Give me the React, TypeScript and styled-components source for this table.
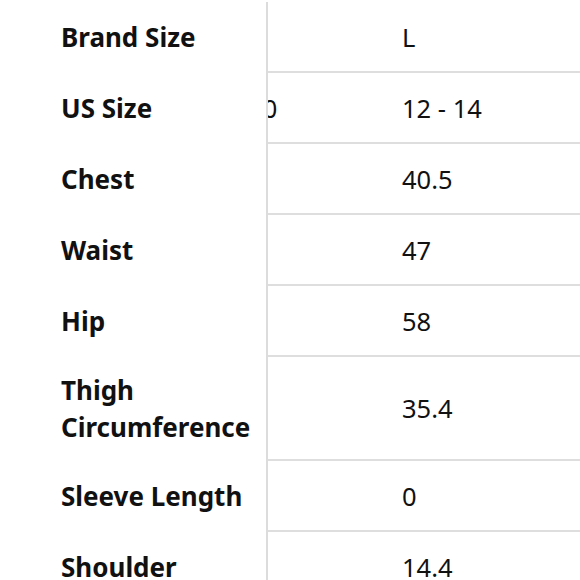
import React from "react";
import styled, { createGlobalStyle } from "styled-components";

const Global = createGlobalStyle`
  html, body { margin: 0; padding: 0; background: #ffffff; }
  body { width: 580px; height: 580px; overflow: hidden; }
`;

const Table = styled.div`
  width: 580px;
  height: 580px;
  overflow: hidden;
  padding-top: 2px;
  box-sizing: border-box;
  display: flex;
  flex-direction: column;
`;

const Row = styled.div<{ $tall?: boolean }>`
  display: flex;
  flex: none;
  height: ${(p) => (p.$tall ? 104 : 71)}px;
`;

const Label = styled.div`
  flex: none;
  width: 268px;
  box-sizing: border-box;
  padding-left: 61px;
  padding-right: 12px;
  display: flex;
  align-items: center;
  background: #ffffff;
  border-right: 2px solid #dcdcdc;
  font-family: "Noto Sans", "DejaVu Sans", sans-serif;
  font-weight: 700;
  font-size: 26px;
  line-height: 37px;
  color: #111111;
`;

const Pane = styled.div`
  flex: 1;
  min-width: 0;
  overflow: hidden;
  border-bottom: 2px solid #dedede;
  display: flex;
  align-items: center;
`;

const Track = styled.div<{ $scroll: number }>`
  display: flex;
  align-items: center;
  flex: none;
  margin-left: ${(p) => -p.$scroll}px;
`;

const Cell = styled.div`
  flex: none;
  width: 190px;
  box-sizing: border-box;
  padding-left: 20px;
  font-family: "Noto Sans", "DejaVu Sans", sans-serif;
  font-weight: 400;
  font-size: 25.5px;
  color: #111111;
  white-space: nowrap;
`;

const rows: { label: string; prev: string; value: string; tall?: boolean }[] = [
  { label: "Brand Size", prev: "M", value: "L" },
  { label: "US Size", prev: "8 - 10", value: "12 - 14" },
  { label: "Chest", prev: "38.5", value: "40.5" },
  { label: "Waist", prev: "45", value: "47" },
  { label: "Hip", prev: "56", value: "58" },
  { label: "Thigh Circumference", prev: "34.2", value: "35.4", tall: true },
  { label: "Sleeve Length", prev: "0", value: "0" },
  { label: "Shoulder", prev: "14", value: "14.4" },
];

export default function App() {
  return (
    <>
      <Global />
      <Table>
        {rows.map((r) => (
          <Row key={r.label} $tall={r.tall}>
            <Label>{r.label}</Label>
            <Pane>
              <Track $scroll={76}>
                <Cell>{r.prev}</Cell>
                <Cell>{r.value}</Cell>
              </Track>
            </Pane>
          </Row>
        ))}
      </Table>
    </>
  );
}
